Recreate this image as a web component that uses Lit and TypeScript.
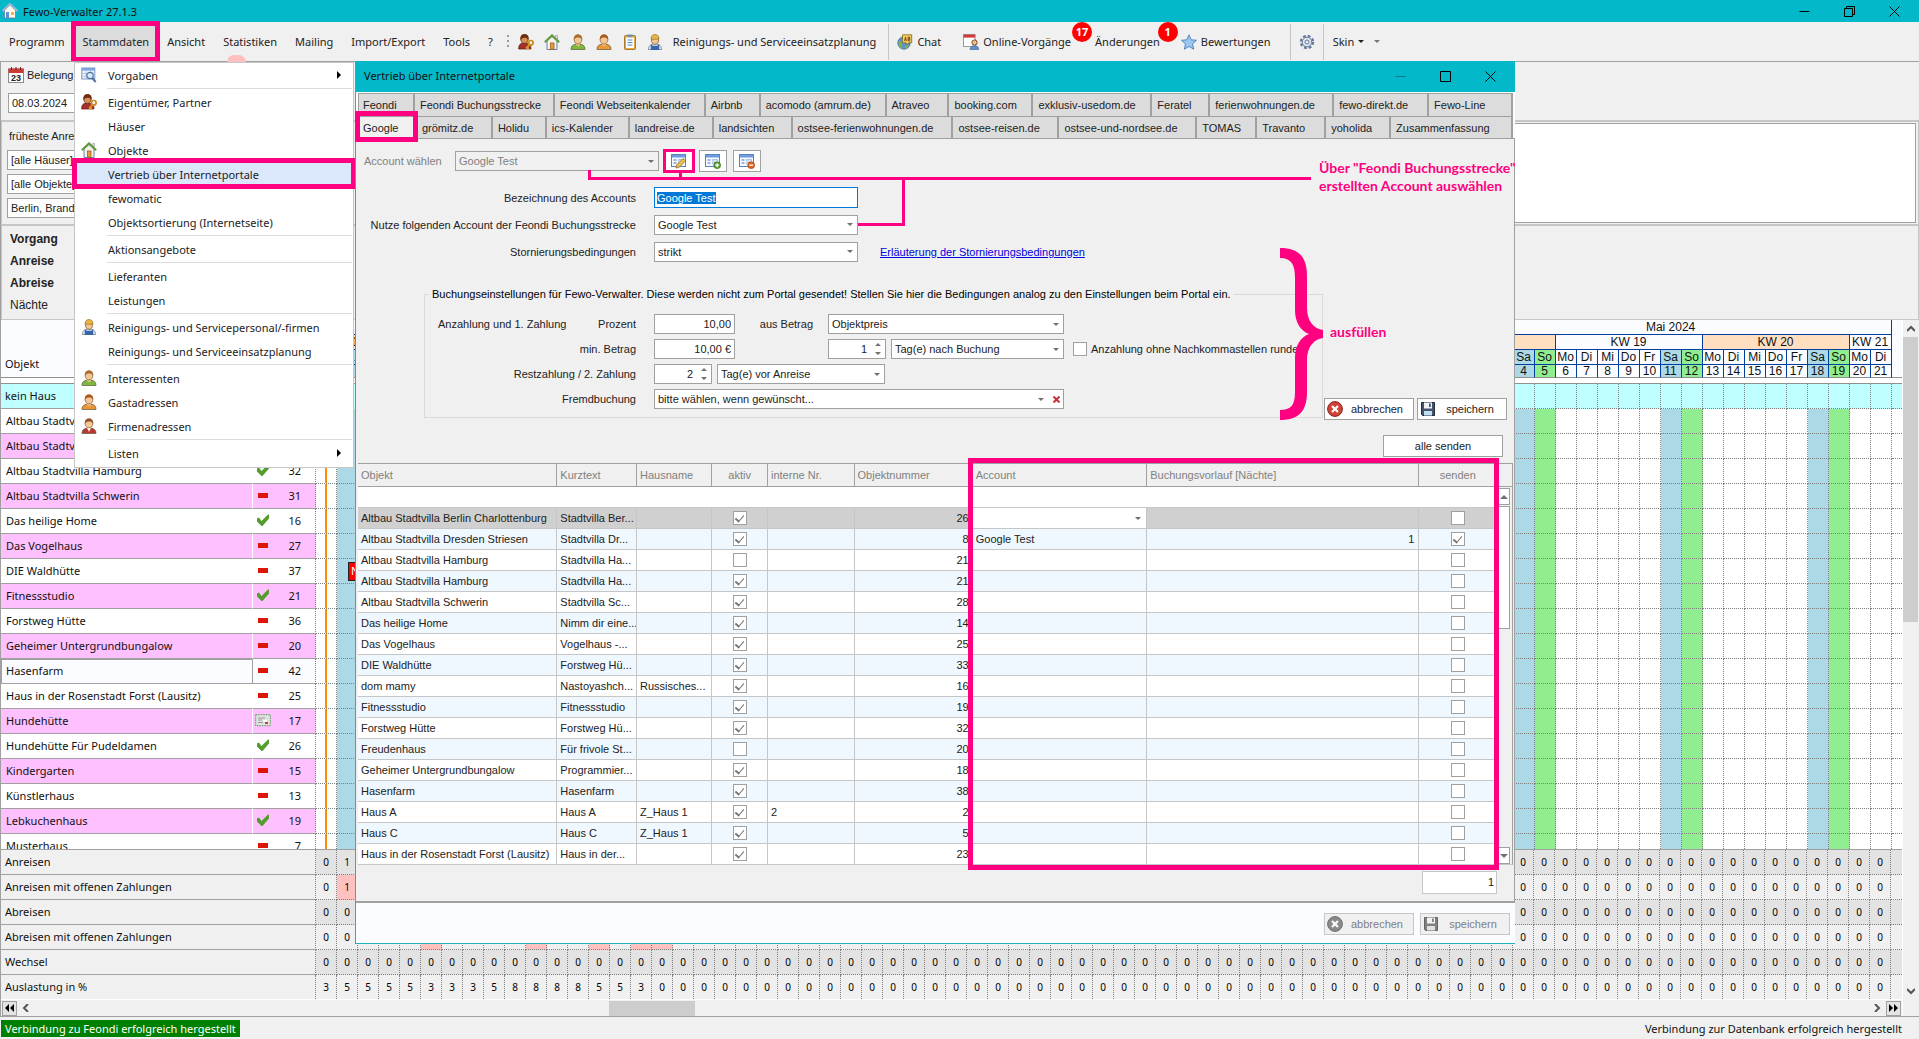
import { LitElement, html, css, svg, nothing } from "lit";
import { customElement } from "lit/decorators.js";
import { classMap } from "lit/directives/class-map.js";

/* ---------- icons (16 x 16 unless noted) ---------- */

const person = (body: string, hair: string) => svg`
  <path d="M1 15.500c0-4 2.500-5.500 7-5.500s7 1.500 7 5.500z" fill=${body} stroke="#5b5b3a" stroke-width=".7"/>
  <path d="M6 9h4v2l-2 1.500-2-1.500z" fill="#eebd8a"/>
  <ellipse cx="8" cy="5.500" rx="3.900" ry="4.500" fill="#f3c795" stroke="#8a5a2b" stroke-width=".7"/>
  <path d="M3.900 5.700C3.600 2 5.300.4 8 .4s4.400 1.600 4.100 5.300C11.200 4 9.500 3.500 8.300 3.500 6.500 3.500 4.800 4 3.900 5.700z" fill=${hair}/>`;

const form = svg`
  <rect x=".5" y="1.500" width="14" height="12" fill="#f6f9ff" stroke="#5b84bd"/>
  <rect x="1" y="2" width="13" height="2.500" fill="#6f9be0"/>
  <path d="M2.500 7h3M2.500 10h3" stroke="#4c77b5" stroke-width="1.200"/>
  <path d="M7.500 6.500h5v1.500h-5zM7.500 9.500h4v1.500h-4z" fill="#fff" stroke="#86a9dc" stroke-width=".7"/>`;

const icons = {
  house: svg`
    <path d="M3 7v8.500h10V7L8 2.500z" fill="#f4f1e6" stroke="#5577a8" stroke-width=".9"/>
    <path d="M.8 8.200 8 1.300l7.200 6.900" fill="none" stroke="#5e9a38" stroke-width="2"/>
    <path d="M11.500 1.500h2v3.500l-2-1.800z" fill="#eee" stroke="#777" stroke-width=".5"/>
    <rect x="6.500" y="9" width="3.500" height="6.200" fill="#e79a3c" stroke="#935315" stroke-width=".7"/>`,
  appHouse: svg`
    <path d="M2.500 7v8h11V7L8 2z" fill="#fdf9ea" stroke="#6c7fa0" stroke-width=".8"/>
    <path d="M.5 8 8 1.200 15.500 8" fill="none" stroke="#9bb7d8" stroke-width="2.200"/>
    <rect x="4" y="9" width="3" height="6" fill="#5f8fd0"/><rect x="9" y="9" width="3" height="3" fill="#f0b44c"/>`,
  owner: svg`
    <path d="M.6 15c0-4.500 2-6 5.900-6s6.500 1.500 6.500 6z" fill="#a6302c" stroke="#5b1714" stroke-width=".7"/>
    <ellipse cx="6.500" cy="5" rx="3.600" ry="4.400" fill="#d98f58" stroke="#643412" stroke-width=".7"/>
    <path d="M2.500 6.500C1.800 2 3.500.2 6.500.2s4.800 1.800 4 6C9.500 4.200 8 3.800 6.500 3.800s-3.100.6-4 2.700z" fill="#6d2f12"/>
    <circle cx="12.800" cy="8.800" r="2.300" fill="none" stroke="#c98a1e" stroke-width="1.700"/>
    <path d="M11.500 10.500 8 14.700m1.200-1.200 1.700 1.500" stroke="#d99a2a" stroke-width="1.800"/>`,
  green: person("#7cb83c", "#a86a2e"),
  orange: person("#ea9536", "#a8581e"),
  red: svg`${person("#b93633", "#93532a")}<path d="M6.500 10.200 8 14l1.500-3.800z" fill="#fff"/>`,
  worker: svg`
    <path d="M1.500 15.500c0-4 2.500-5.500 6.500-5.500s6.500 1.500 6.500 5.500z" fill="#e9eef5" stroke="#4a5668" stroke-width=".6"/>
    <path d="M4.500 15.500v-5M11.500 15.500v-5M4.500 12.500h7v3h-7z" fill="#3466ad" stroke="#3466ad" stroke-width="1.500"/>
    <ellipse cx="8" cy="6" rx="3.500" ry="4.200" fill="#f3c795" stroke="#7a4b1e" stroke-width=".7"/>
    <path d="M4 5.200C4 2 5.500.5 8 .5s4 1.500 4 4.700z" fill="#e8b548" stroke="#8e6a1b" stroke-width=".6"/>`,
  clipboard: svg`
    <rect x="2.500" y="1.500" width="11" height="14" rx="1" fill="#e5a93a" stroke="#97661a" stroke-width=".8"/>
    <rect x="4" y="3.500" width="8" height="10.500" fill="#fff"/>
    <rect x="5.500" y=".5" width="5" height="2.600" fill="#6f8fc0"/>
    <path d="M5.500 6h5M5.500 8.500h5M5.500 11h5" stroke="#4f84cc"/>`,
  chat: svg`
    <circle cx="7" cy="9" r="6.200" fill="#5d93cf" stroke="#345d8e" stroke-width=".7"/>
    <path d="M2 7c2 0 3 2 2.500 4s1 3 2.500 4c-4 0-6.500-4-5-8zM8 12l4-1c-.5 2-2 3.500-4 4z" fill="#7db74a"/>
    <path d="M5.500.8h9.200v8h-3l-1.500 2-1-2h-3.700z" fill="#f5cf63" stroke="#8b6513" stroke-width=".8"/>
    <path d="M7.500 7 8.500 3l1 4M7.800 5.800h1.400M11.200 3v4h1.500V5h-1.500 1.500V3z" fill="none" stroke="#6b3f10" stroke-width=".8"/>`,
  online: svg`
    <rect x=".6" y=".6" width="11.500" height="12" fill="#fff" stroke="#7d8694" stroke-width=".8"/>
    <rect x=".6" y=".6" width="11.500" height="3" fill="#d23c37"/>
    <circle cx="11.500" cy="8.500" r="2.600" fill="#f0c08e" stroke="#7c4622"/>
    <path d="M7 15.500c0-2.500 1.800-3.800 4.500-3.800s4.300 1.300 4.300 3.800z" fill="#5f8ec9" stroke="#3a608f" stroke-width=".6"/>`,
  star: svg`<path d="m8 .8 2.200 5 5.300.5-4 3.600 1.200 5.300L8 12.400l-4.700 2.800 1.200-5.300-4-3.600 5.300-.5z" fill="#9cc6ef" stroke="#4a7fb8" stroke-width=".9"/>`,
  gear: svg`
    <circle cx="8" cy="8" r="6.200" fill="none" stroke="#62769b" stroke-width="2" stroke-dasharray="2.900 1.970"/>
    <circle cx="8" cy="8" r="4.800" fill="#dfe5ee" stroke="#62769b"/>
    <circle cx="8" cy="8" r="2" fill="#f0f0f0" stroke="#62769b"/>`,
  calendar: svg`
    <rect x=".5" y="2" width="15" height="13.500" fill="#fff" stroke="#8c8c8c"/>
    <rect x=".5" y="1.500" width="15" height="4.500" fill="#cf3a35"/>
    <path d="M3.500 0v3M8 0v3M12.500 0v3" stroke="#6e2422"/>`,
  lookup: svg`
    <rect x=".8" y="1" width="13" height="11" fill="#eef4fd" stroke="#7796c6"/>
    <rect x="1" y="1" width="12.600" height="2.600" fill="#7ba3de"/>
    <path d="M1 6.500h13M1 9.300h13M5 3.500V12M9.500 3.500V12" stroke="#a9c0e2" stroke-width=".8"/>
    <circle cx="9" cy="8.500" r="3.200" fill="#dcecff" fill-opacity=".8" stroke="#55719c" stroke-width="1.200"/>
    <path d="m11.200 11 3.500 4" stroke="#55719c" stroke-width="2"/>`,
  check: svg`<path d="M2 6.500 4 5.500l2.500 3.500L13 2.500h1v4L7.500 14h-1L2 9.500z" fill="#549c2c"/>`,
  minus: svg`<rect x="3" y="6" width="10" height="5" fill="#dd1507"/>`,
  card: svg`
    <rect x=".7" y="2.700" width="14.600" height="11" fill="#dfe3e2" stroke="#4e9a55" stroke-dasharray="1.500 1"/>
    <path d="M3 6h7M3 8h4M3 10.500h5" stroke="#9a9a9a"/><path d="M8 8h4v1.500H8z" fill="#fff"/>
    <rect x="10" y="10" width="3" height="2" fill="#e1371f"/>`,
  edit: svg`${form}<path d="m5 15 .6-3L12 5.500l2.600 2.300L8 14.300z" fill="#f2c24f" stroke="#94691b" stroke-width=".8"/>`,
  add: svg`${form}<circle cx="12.200" cy="12.200" r="3.400" fill="#5a9e33" stroke="#2f6a14" stroke-width=".6"/><path d="M10.200 12.200h4M12.200 10.200v4" stroke="#fff" stroke-width="1.300"/>`,
  remove: svg`${form}<circle cx="12.200" cy="12.200" r="3.400" fill="#e2631c" stroke="#a33a08" stroke-width=".6"/><path d="M10.200 12.200h4" stroke="#fff" stroke-width="1.300"/>`,
  cancel: svg`
    <circle cx="8" cy="8" r="7.400" fill="#cf4338" stroke="#8d1f18"/>
    <path d="m4.300 5.800 1.500-1.500L8 6.400l2.200-2.100 1.500 1.500L9.600 8l2.100 2.200-1.500 1.500L8 9.600l-2.200 2.100-1.500-1.500L6.400 8z" fill="#fff"/>`,
  save: svg`
    <path d="M1.500 1.500h13v13h-12l-1-1z" fill="#44546e" stroke="#222c3d"/>
    <rect x="4" y="1.500" width="8" height="6" fill="#eef2f7"/><rect x="9" y="2.500" width="1.800" height="3.500" fill="#44546e"/>
    <rect x="4" y="10" width="8" height="4.500" fill="#bfe0f2"/>`,
};

type IconName = keyof typeof icons;
const icon = (name: IconName) =>
  html`<svg class="icon" viewBox="0 0 16 16" width="16" height="16" aria-hidden="true">${icons[name]}</svg>`;

const glyph = {
  min: html`<svg width="11" height="11" viewBox="0 0 11 11"><path d="M.5 5.500h10" stroke="currentColor"/></svg>`,
  max: html`<svg width="11" height="11" viewBox="0 0 11 11"><path d="M.5.5h10v10H.5z" fill="none" stroke="currentColor"/></svg>`,
  restore: html`<svg width="11" height="11" viewBox="0 0 11 11"><path d="M.5 2.500h8v8h-8zM2.500 2.500v-2h8v8h-2" fill="none" stroke="currentColor"/></svg>`,
  close: html`<svg width="11" height="11" viewBox="0 0 11 11"><path d="m.5.5 10 10m0-10-10 10" stroke="currentColor"/></svg>`,
};

const base = css`
  * { box-sizing: border-box; }
  button, input, select { font: inherit; color: inherit; margin: 0; border-radius: 0; }
  button { padding: 0; background: none; border: 0; white-space: nowrap; }
  svg { display: block; flex: none; }
  .winbtns { display: flex; margin-left: auto; padding-right: 2px; }
  .winbtns button { width: 45px; display: grid; place-items: center; color: #000; }
`;

/* ---------- occupancy planner ---------- */

const DAYS = 75;
const FIRST_SUNDAY = 2;
const dayNames = ["Fr", "Sa", "So", "Mo", "Di", "Mi", "Do"];
const columns = Array.from({ length: DAYS }, (_, i) => i);
const dayNumber = (i: number) => (i < 24 ? i + 8 : i < 54 ? i - 23 : i - 53);
const weekend = (i: number) => ((i - FIRST_SUNDAY + 7) % 7 === 0 ? "so" : (i - 1 + 7) % 7 === 0 ? "sa" : "");

type PlannerRow = { name: string; state: IconName; no: number; pink?: boolean };
const objects: PlannerRow[] = [
  { name: "Altbau Stadtvilla Berlin", state: "check", no: 26 },
  { name: "Altbau Stadtvilla Dresden", state: "minus", no: 8, pink: true },
  { name: "Altbau Stadtvilla Hamburg", state: "check", no: 32 },
  { name: "Altbau Stadtvilla Schwerin", state: "minus", no: 31, pink: true },
  { name: "Das heilige Home", state: "check", no: 16 },
  { name: "Das Vogelhaus", state: "minus", no: 27, pink: true },
  { name: "DIE Waldhütte", state: "minus", no: 37 },
  { name: "Fitnessstudio", state: "check", no: 21, pink: true },
  { name: "Forstweg Hütte", state: "minus", no: 36 },
  { name: "Geheimer Untergrundbungalow", state: "minus", no: 20, pink: true },
  { name: "Hasenfarm", state: "minus", no: 42 },
  { name: "Haus in der Rosenstadt Forst (Lausitz)", state: "minus", no: 25 },
  { name: "Hundehütte", state: "card", no: 17, pink: true },
  { name: "Hundehütte Für Pudeldamen", state: "check", no: 26 },
  { name: "Kindergarten", state: "minus", no: 15, pink: true },
  { name: "Künstlerhaus", state: "minus", no: 13 },
  { name: "Lebkuchenhaus", state: "check", no: 19, pink: true },
  { name: "Musterhaus", state: "minus", no: 7 },
];

const summary: { name: string; values: number[]; open: number[] }[] = [
  { name: "Anreisen", values: [0, 1], open: [] },
  { name: "Anreisen mit offenen Zahlungen", values: [0, 1], open: [1] },
  { name: "Abreisen", values: [], open: [] },
  { name: "Abreisen mit offenen Zahlungen", values: [], open: [5, 10, 13, 15, 16] },
  { name: "Wechsel", values: [], open: [] },
  { name: "Auslastung in %", values: [3, 5, 5, 5, 5, 3, 3, 3, 5, 8, 8, 8, 8, 5, 5, 3], open: [] },
];

@customElement("booking-planner")
class BookingPlanner extends LitElement {
  static styles = [base, css`
    :host { display: flex; flex: 1; min-height: 0; background: #f0f0f0; border-left: 1px solid #a0a0a0; }
    .main { flex: 1; min-width: 0; display: flex; flex-direction: column; }
    .view { flex: 1; min-height: 0; overflow: hidden; background: #fff; }
    table { border-collapse: separate; border-spacing: 0; table-layout: fixed; width: 100%; }
    th, td { padding: 0; font-weight: 400; white-space: nowrap; overflow: hidden; }
    .c-name { width: 252px; } .c-state { width: 25px; } .c-no { width: 38px; } .c-day { width: 21px; }
    thead th { background: #fbfcff; color: #111; font-family: "Liberation Sans", Arial, sans-serif; font-size: 12px; line-height: 14px; height: 15px; text-align: center; border-right: 1px solid #003f9f; border-bottom: 1px solid #003f9f; }
    thead tr:last-child th { height: 13px; line-height: 12px; border-bottom: 1px solid #909090; }
    thead tr:first-child th.title { vertical-align: bottom; text-align: left; border-right: 0; border-bottom: 1px solid #909090; padding: 0 0 6px 4px; font-family: inherit; font-size: 11px; }
    thead .tail { border-right: 0; border-bottom-color: #909090; }
    thead .even { background: #ffdfbf; }
    thead .sa, .sa { background: #add8e6; }
    thead .so, .so { background: #90ee90; }
    .gap td { height: 6px; border-bottom: 1px solid #909090; }
    tbody tr.obj td, tbody tr.none td { height: 25px; border-bottom: 1px dotted #808080; border-right: 1px dotted #808080; }
    tbody tr.none td.name { border-bottom: 1px solid #a0a0a0; }
    .name, .no { padding-bottom: 2px; }
    .obj .name { padding-left: 5px; }
    tr.obj td.name { border-right: 1px solid #fff; border-bottom: 1px solid #a0a0a0; }
    tr.obj td.state { border-right: 0; border-bottom: 1px solid #a0a0a0; padding-bottom: 2px; }
    tr.obj td.no { border-bottom: 1px solid #a0a0a0; }
    .state svg { margin: 0 auto 0 2px; }
    .no { text-align: right; padding-right: 14px; }
    tbody .pink .name, tbody .pink .state, tbody .pink .no { background: #ffc0ff; }
    tbody .none td { background: #c0ffff; }
    .none .name { padding-left: 4px; }
    tbody tr.current td.name { border: 1px solid #a0a0a0; background: #fbfcff; padding-left: 4px; }
    tbody .current .state, tbody .current .no { background: #fbfcff; }
    .today { background: linear-gradient(#ff8c00, #ff8c00) 9px 0 / 2px 100% no-repeat; }
    .booking { display: block; width: 20px; height: 19px; margin-left: 11px; padding-left: 2px; background: #f00; border: 1px solid #222; color: #fff; line-height: 16px; }
    .sums { border-top: 1px solid #a0a0a0; background: #f0f0f0; }
    .sums th { text-align: left; padding: 0 0 2px 4px; border-bottom: 1px solid #a0a0a0; border-right: 1px dotted #808080; }
    .sums td { height: 25px; padding-bottom: 1px; text-align: center; border-right: 1px dotted #808080; border-bottom: 1px dotted #808080; font-size: 10px; color: #000; }
    .sums tr:last-child > * { border-bottom: 0; height: 24px; }
    .sums tr:nth-child(odd) td { background: #e3e3e3; }
    .sums tr td.open { background: #ffc0c0; }
    td:last-child { border-right: 0 !important; }
    .hscroll { display: flex; align-items: center; height: 17px; padding: 0 1px; border-top: 1px solid #fff; color: #555; }
    .hscroll .jump { width: 15px; height: 15px; border: 1px solid #a0a0a0; background: #e3e3e3; display: grid; place-items: center; color: #000; }
    .hscroll .step { width: 18px; height: 15px; display: grid; place-items: center; }
    .vscroll .step { width: 16px; height: 17px; display: grid; place-items: center; }
    .track { flex: 1; display: grid; grid-template-columns: 574fr 86fr 1173fr; height: 15px; }
    .thumb { background: #cdcdcd; grid-column: 2; }
    .vscroll { width: 17px; display: flex; flex-direction: column; color: #555; border-left: 1px solid #fff; }
    .vscroll .track { display: grid; grid-template-columns: 1fr; grid-template-rows: 285fr 360fr; height: auto; }
    .vscroll .thumb { grid-column: 1; margin-right: 1px; }
    .vscroll::after { content: ""; height: 17px; }
  `];

  cols() {
    return html`<colgroup><col class="c-name"><col class="c-state"><col class="c-no">${columns.map(() => html`<col class="c-day">`)}<col></colgroup>`;
  }

  render() {
    const weeks = Array.from({ length: 12 }, (_, i) => ({ no: 10 + i, span: i === 0 ? 3 : i === 11 ? 2 : 7 }));
    const chevron = (d: string) => html`<svg width="8" height="8" viewBox="0 0 8 8"><path d=${d} fill="none" stroke="#555" stroke-width="2"/></svg>`;
    return html`
      <div class="main">
        <div class="view">
          <table>
            ${this.cols()}
            <thead>
              <tr><th class="title" colspan="3" rowspan="4">Objekt</th><th colspan="24">März 2024</th><th colspan="30">April 2024</th><th colspan="21">Mai 2024</th><th class="tail" rowspan="4"></th></tr>
              <tr>${weeks.map((w) => html`<th colspan=${w.span} class=${w.no % 2 ? "" : "even"}>KW ${w.no}</th>`)}</tr>
              <tr>${columns.map((i) => html`<th class=${weekend(i)}>${dayNames[i % 7]}</th>`)}</tr>
              <tr>${columns.map((i) => html`<th class=${weekend(i)}>${dayNumber(i)}</th>`)}</tr>
            </thead>
            <tbody>
              <tr class="gap"><td colspan=${DAYS + 4}></td></tr>
              <tr class="none"><td class="name" colspan="3">kein Haus</td>${columns.map(() => html`<td></td>`)}<td></td></tr>
              ${objects.map((o) => html`
                <tr class=${classMap({ obj: true, pink: !!o.pink, current: o.name === "Hasenfarm" })}>
                  <td class="name">${o.name}</td><td class="state">${icon(o.state)}</td><td class="no">${o.no}</td>
                  ${columns.map((i) => html`<td class=${i === 0 ? "today" : weekend(i)}>${i === 1 && o.name === "DIE Waldhütte" ? html`<span class="booking">N</span>` : nothing}</td>`)}
                  <td></td>
                </tr>`)}
            </tbody>
          </table>
        </div>
        <table class="sums">
          ${this.cols()}
          <tbody>
            ${summary.map((s) => html`<tr><th colspan="3" scope="row">${s.name}</th>${columns.map((i) => html`<td class=${s.open.includes(i) ? "open" : ""}>${s.values[i] ?? 0}</td>`)}<td></td></tr>`)}
          </tbody>
        </table>
        <div class="hscroll">
          <button class="jump" aria-label="Zum Anfang"><svg width="9" height="8" viewBox="0 0 9 8"><path d="M4 0v8L0 4zM9 0v8L5 4z"/></svg></button>
          <button class="step" aria-label="Zurück">${chevron("M6 0 2 4l4 4")}</button>
          <div class="track"><div class="thumb"></div></div>
          <button class="step" aria-label="Weiter">${chevron("m2 0 4 4-4 4")}</button>
          <button class="jump" aria-label="Zum Ende"><svg width="9" height="8" viewBox="0 0 9 8"><path d="m0 0 4 4-4 4zM5 0l4 4-4 4z"/></svg></button>
        </div>
      </div>
      <div class="vscroll">
        <button class="step" aria-label="Nach oben">${chevron("m0 6 4-4 4 4")}</button>
        <div class="track"><div class="thumb"></div></div>
        <button class="step" aria-label="Nach unten">${chevron("m0 2 4 4 4-4")}</button>
      </div>`;
  }
}

/* ---------- drop-down menu ---------- */

type Entry = { text: string; icon?: IconName; sub?: boolean; active?: boolean } | "-";
const entries: Entry[] = [
  { text: "Vorgaben", icon: "lookup", sub: true }, "-",
  { text: "Eigentümer, Partner", icon: "owner" }, { text: "Häuser" }, { text: "Objekte", icon: "house" },
  { text: "Vertrieb über Internetportale", active: true }, { text: "fewomatic" }, { text: "Objektsortierung (Internetseite)" }, "-",
  { text: "Aktionsangebote" }, "-",
  { text: "Lieferanten" }, { text: "Leistungen" }, "-",
  { text: "Reinigungs- und Servicepersonal/-firmen", icon: "worker" }, { text: "Reinigungs- und Serviceeinsatzplanung" }, "-",
  { text: "Interessenten", icon: "green" }, { text: "Gastadressen", icon: "orange" }, { text: "Firmenadressen", icon: "red" }, "-",
  { text: "Listen", sub: true },
];

@customElement("master-data-menu")
class MasterDataMenu extends LitElement {
  static styles = [base, css`
    :host { display: block; background: #fff; border: 1px solid #c6c6c6; padding: 0 0 2px; }
    nav { display: flex; flex-direction: column; }
    button { position: relative; display: grid; grid-template-columns: 27px 1fr 12px; align-items: center; height: 24px; padding: 0 4px 0 6px; text-align: left; color: #222; }
    .active { background: #dbe8fc; }
    .active::after { content: ""; position: absolute; inset: -4px -3px -3px -3px; border: 5px solid #ff0080; }
    hr { width: calc(100% - 33px); height: 1px; margin: 1px 1px 1px auto; border: 0; background: #dcdcdc; }
  `];
  render() {
    return html`<nav>${entries.map((e) => e === "-" ? html`<hr>` : html`
      <button class=${e.active ? "active" : ""}><span>${e.icon ? icon(e.icon) : nothing}</span>${e.text}
        ${e.sub ? html`<svg width="4" height="8" viewBox="0 0 4 8"><path d="m0 0 4 4-4 4z"/></svg>` : nothing}</button>`)}</nav>`;
  }
}

/* ---------- portal dialog ---------- */

const tabsTop = ["Feondi", "Feondi Buchungsstrecke", "Feondi Webseitenkalender", "Airbnb", "acomodo (amrum.de)", "Atraveo", "booking.com", "exklusiv-usedom.de", "Feratel", "ferienwohnungen.de", "fewo-direkt.de", "Fewo-Line"];
const tabsBottom = ["Google", "grömitz.de", "Holidu", "ics-Kalender", "landreise.de", "landsichten", "ostsee-ferienwohnungen.de", "ostsee-reisen.de", "ostsee-und-nordsee.de", "TOMAS", "Travanto", "yoholida", "Zusammenfassung"];

type Row = [string, string, string, boolean, string, number];
const rows: Row[] = [
  ["Altbau Stadtvilla Berlin Charlottenburg", "Stadtvilla Ber...", "", true, "", 26],
  ["Altbau Stadtvilla Dresden Striesen", "Stadtvilla Dr...", "", true, "", 8],
  ["Altbau Stadtvilla Hamburg", "Stadtvilla Ha...", "", false, "", 21],
  ["Altbau Stadtvilla Hamburg", "Stadtvilla Ha...", "", true, "", 21],
  ["Altbau Stadtvilla Schwerin", "Stadtvilla Sc...", "", true, "", 28],
  ["Das heilige Home", "Nimm dir eine...", "", true, "", 14],
  ["Das Vogelhaus", "Vogelhaus -...", "", true, "", 25],
  ["DIE Waldhütte", "Forstweg Hü...", "", true, "", 33],
  ["dom mamy", "Nastoyashch...", "Russisches...", true, "", 16],
  ["Fitnessstudio", "Fitnessstudio", "", true, "", 19],
  ["Forstweg Hütte", "Forstweg Hü...", "", true, "", 32],
  ["Freudenhaus", "Für frivole St...", "", false, "", 20],
  ["Geheimer Untergrundbungalow", "Programmier...", "", true, "", 18],
  ["Hasenfarm", "Hasenfarm", "", true, "", 38],
  ["Haus A", "Haus A", "Z_Haus 1", true, "2", 2],
  ["Haus C", "Haus C", "Z_Haus 1", true, "", 5],
  ["Haus in der Rosenstadt Forst (Lausitz)", "Haus in der...", "", true, "", 23],
];

@customElement("portal-dialog")
class PortalDialog extends LitElement {
  static styles = [base, css`
    :host { display: block; background: #fbfcff; border: solid #1fb3c2; border-width: 0 0 1px 1px; color: #222; font-family: "Liberation Sans", Arial, sans-serif; font-size: 11px; }
    header { display: flex; height: 31px; background: #03b8c8; color: #111; padding: 0 0 0 8px; font-family: "Noto Sans", sans-serif; }
    header h2 { margin: 0; font: inherit; line-height: 30px; }
    header button:disabled { opacity: .35; }
    .tabs { display: grid; background: #fff; margin: 0 2px; border-left: 1px solid #a0a0a0; }
    .tabs button { height: 22px; background: #dcdcdc; border: solid #a0a0a0; border-width: 1px 2px 0 0; text-align: left; padding: 0 0 0 5px; overflow: hidden; }
    .top { margin-top: 1px; grid-template-columns: 56fr 140fr 151fr 55fr 126fr 63fr 84fr 119fr 58fr 124fr 95fr 84fr; }
    .top button { height: 23px; }
    .bottom { grid-template-columns: 58fr 76fr 54fr 83fr 84fr 79fr 161fr 106fr 138fr 60fr 69fr 65fr 122fr; }
    .tabs .on { position: relative; background: #f0f0f0; border-bottom: 0; overflow: visible; padding-left: 4px; }
    .tabs button:first-child { padding-left: 4px; }
    .on::after { content: ""; position: absolute; inset: -6px -3px -4px -4px; border: 5px solid #ff0080; }
    .page { background: #f0f0f0; border: solid #a0a0a0; border-width: 1px 1px 2px 0; padding: 10px 0 0; }
    .bar { display: flex; align-items: center; gap: 4px; padding-left: 8px; height: 24px; }
    .bar label { width: 87px; color: #808080; }
    .bar button { width: 28px; height: 22px; background: #fff; border: 1px solid #a0a0a0; display: grid; place-items: center; }
    .bar button + button { margin-right: 2px; }
    .bar .marked { width: 32px; height: 24px; border: 3px solid #ff0080; }
    .field { height: 20px; width: 100%; min-width: 0; background: #fff; border: 1px solid #a0a0a0; padding: 0 3px; outline: 0; appearance: none; }
    .num { text-align: right; appearance: textfield; }
    .num::-webkit-inner-spin-button { appearance: none; }
    .focus { height: 21px; border-color: #0078d7; padding: 0 2px; }
    .focus::selection { background: #0078d7; color: #fff; }
    .field:disabled { background: #f0f0f0; color: #808080; opacity: 1; }
    .sel { display: grid; align-items: center; }
    .sel > *, .sel::after { grid-area: 1 / 1; }
    .sel::after { content: ""; justify-self: end; margin-right: 5px; border: solid transparent; border-width: 3px 3px 0; border-top-color: #707070; pointer-events: none; }
    .spin::after { display: none; }
    .spin .num { padding-right: 18px; }
    .spin svg { justify-self: end; margin-right: 5px; pointer-events: none; }
    .w81 { width: 81px; } .w58 { width: 58px; } .w168 { width: 168px; } .w173 { width: 173px; } .w204 { width: 204px; } .w236 { width: 236px; } .w410 { width: 410px; }
    .clear::after { margin-right: 20px; }
    .clear button { justify-self: end; width: 15px; display: grid; place-items: center; }
    .form { display: grid; grid-template-columns: 280px 204px auto; column-gap: 18px; row-gap: 6px; grid-auto-rows: 21px; align-items: center; margin-top: 14px; }
    .form > label { grid-column: 1; text-align: right; }
    .form a { color: #0000e0; margin-left: 4px; justify-self: start; }
    .booking { display: flex; align-items: flex-end; gap: 3px; margin-top: 25px; padding: 0 7px 0 68px; }
    fieldset { flex: 1; margin: 0 -2px 2px 0; border: 1px solid #dadada; padding: 13px 0 8px; min-width: 0; }
    legend { margin-left: 4px; padding: 0 3px; line-height: 14px; color: #000; }
    .line { display: flex; align-items: center; height: 20px; margin-bottom: 5px; }
    .line:last-child { margin-bottom: 0; }
    .lead { width: 211px; margin-right: 18px; padding-left: 13px; display: flex; justify-content: space-between; }
    .lead label { margin-left: auto; }
    .mid { width: 93px; padding-right: 15px; text-align: right; }
    .near { margin-left: 5px; }
    input[type="checkbox"] { appearance: none; width: 14px; height: 14px; background: #fff; border: 1px solid #a0a0a0; display: grid; place-items: center; flex: none; }
    input[type="checkbox"]:checked::after { content: ""; width: 4px; height: 7px; margin-top: -2px; border: solid #777; border-width: 0 1px 2px 0; transform: rotate(40deg); }
    .round { display: flex; align-items: center; gap: 4px; margin-left: 9px; white-space: nowrap; }
    .cmd { display: grid; grid-template-columns: 16px 1fr; align-items: center; width: 90px; height: 22px; padding: 0 2px; background: #fff; border: 1px solid #a0a0a0; }
    .cmd:disabled { background: #f0f0f0; border-color: #c6c6c6; color: #808080; }
    .cmd:disabled svg { filter: grayscale(1); opacity: .7; }
    .all { display: block; width: 120px; height: 22px; margin: 15px 11px 6px auto; background: #fff; border: 1px solid #a0a0a0; }
    .data { display: flex; margin: 0 1px 0 2px; border: 1px solid #a0a0a0; border-bottom-color: #c6c6c6; border-left: 0; }
    table { flex: 1; border-collapse: separate; border-spacing: 0; table-layout: fixed; width: 0; }
    th, td { padding: 0 3px; font-weight: 400; text-align: left; white-space: nowrap; overflow: hidden; border: solid #c6c6c6; border-width: 0 1px 1px 0; }
    th { height: 23px; color: #808080; border-color: #a0a0a0; }
    .filter td { height: 21px; background: #fff; border-right: 0; }
    tbody td { height: 21px; background: #fff; }
    tbody tr:nth-child(odd) td { background: #eff8ff; }
    tbody tr.filter td { background: #fff; }
    tbody tr.picked td { background: #d0d0d0; }
    tbody tr:last-child td { border-bottom: 0; height: 20px; }
    tbody tr.picked td.open { background: #fff; padding: 0; }
    .account { padding-left: 5px; }
    .open .field { border: 0; }
    .center { text-align: center; }
    td.center input { margin: 0 auto; }
    .right { text-align: right; padding-right: 1px; }
    .vbar { width: 15px; display: flex; flex-direction: column; padding-right: 2px; }
    .vbar i { height: 23px; border-bottom: 1px solid #a0a0a0; margin-right: -2px; }
    .vbar button { height: 17px; margin-top: 1px; border: 1px solid #a0a0a0; background: #fff; display: grid; place-items: center; color: #707070; }
    .rail { flex: 1; display: grid; grid-template-rows: 125fr 218fr; }
    .rail span { border: 1px solid #a0a0a0; background: #fff; margin-top: 1px; }
    .total { display: flex; justify-content: flex-end; height: 36px; padding: 6px 17px 7px 0; }
    .total output { width: 75px; background: #fff; border: 1px solid #c6c6c6; text-align: right; line-height: 21px; padding-right: 2px; }
    footer { display: flex; justify-content: flex-end; gap: 6px; padding: 10px 5px 8px; }
    .notes { position: absolute; left: 0; top: 0; width: 100%; height: 100%; pointer-events: none; overflow: visible; }
    .note { position: absolute; color: #ff0080; font-family: Lato, "Open Sans", sans-serif; font-weight: 700; font-size: 14px; line-height: 18px; white-space: nowrap; margin: 0; }
    .n1 { left: 963px; top: 98px; } .n2 { left: 974px; top: 262px; }
  `];

  firstUpdated() {
    const el = this.renderRoot.querySelector<HTMLInputElement>("#name");
    el?.focus();
    el?.select();
  }

  select(id: string, value: string, cls: string, disabled = false, label = "") {
    return html`<span class="sel ${cls}"><select class="field" id=${id} ?disabled=${disabled} aria-label=${label || nothing}><option>${value}</option></select></span>`;
  }

  spin(id: string, value: string, label: string) {
    return html`<span class="sel spin w58"><input class="field num" type="number" id=${id} .value=${value} aria-label=${label}>
      <svg width="6" height="12" viewBox="0 0 6 12"><path d="m0 3 3-3 3 3zM0 9l3 3 3-3z" fill="#707070"/></svg></span>`;
  }

  render() {
    return html`
      <header><h2>Vertrieb über Internetportale</h2>
        <div class="winbtns"><button disabled aria-label="Minimieren">${glyph.min}</button><button aria-label="Maximieren">${glyph.max}</button><button aria-label="Schließen">${glyph.close}</button></div>
      </header>
      <div class="tabs top">${tabsTop.map((t) => html`<button>${t}</button>`)}</div>
      <div class="tabs bottom">${tabsBottom.map((t) => html`<button class=${t === "Google" ? "on" : ""}>${t}</button>`)}</div>
      <section class="page">
        <div class="bar">
          <label for="account">Account wählen</label>
          ${this.select("account", "Google Test", "w204", true)}
          <button class="marked" aria-label="Bearbeiten">${icon("edit")}</button>
          <button aria-label="Neu">${icon("add")}</button>
          <button aria-label="Löschen">${icon("remove")}</button>
        </div>
        <div class="form">
          <label for="name">Bezeichnung des Accounts</label><input id="name" class="field focus" .value=${"Google Test"}>
          <label for="feondi">Nutze folgenden Account der Feondi Buchungsstrecke</label>${this.select("feondi", "Google Test", "")}
          <label for="storno">Stornierungsbedingungen</label>${this.select("storno", "strikt", "")}<a href="#storno">Erläuterung der Stornierungsbedingungen</a>
        </div>
        <div class="booking">
          <fieldset>
            <legend>Buchungseinstellungen für Fewo-Verwalter. Diese werden nicht zum Portal gesendet! Stellen Sie hier die Bedingungen analog zu den Einstellungen beim Portal ein.</legend>
            <div class="line"><div class="lead"><span>Anzahlung und 1. Zahlung</span><label for="percent">Prozent</label></div>
              <input id="percent" class="field num w81" .value=${"10,00"}><label class="mid" for="base">aus Betrag</label>${this.select("base", "Objektpreis", "w236")}</div>
            <div class="line"><div class="lead"><label for="minimum">min. Betrag</label></div>
              <input id="minimum" class="field num w81" .value=${"10,00 €"}><span class="mid"></span>${this.spin("days1", "1", "Tage nach Buchung")}${this.select("unit1", "Tag(e) nach Buchung", "w173 near", false, "Einheit")}
              <label class="round"><input type="checkbox">Anzahlung ohne Nachkommastellen runden</label></div>
            <div class="line"><div class="lead"><label for="days2">Restzahlung / 2. Zahlung</label></div>
              ${this.spin("days2", "2", "Restzahlung")}${this.select("unit2", "Tag(e) vor Anreise", "w168 near", false, "Einheit")}</div>
            <div class="line"><div class="lead"><label for="foreign">Fremdbuchung</label></div>
              <span class="sel clear w410"><select class="field" id="foreign"><option>bitte wählen, wenn gewünscht...</option></select><button aria-label="Leeren"><svg width="7" height="7" viewBox="0 0 7 7"><path d="m.5.5 6 6m0-6-6 6" stroke="#c8303c" stroke-width="2"/></svg></button></span></div>
          </fieldset>
          <button class="cmd">${icon("cancel")}<span>abbrechen</span></button>
          <button class="cmd">${icon("save")}<span>speichern</span></button>
        </div>
        <button class="all">alle senden</button>
        <div class="data">
          <table>
            <colgroup>${[17.5, 7, 6.6, 4.9, 7.6, 10.2, 15.5, 23.9].map((w) => html`<col style="width:${w}%">`)}<col></colgroup>
            <thead><tr><th>Objekt</th><th>Kurztext</th><th>Hausname</th><th class="center">aktiv</th><th>interne Nr.</th><th>Objektnummer</th><th class="account">Account</th><th>Buchungsvorlauf [Nächte]</th><th class="center">senden</th></tr></thead>
            <tbody>
              <tr class="filter"><td colspan="9"></td></tr>
              ${rows.map((r, i) => html`<tr class=${i === 0 ? "picked" : ""}>
                <td>${r[0]}</td><td>${r[1]}</td><td>${r[2]}</td>
                <td class="center"><input type="checkbox" .checked=${r[3]} aria-label="aktiv"></td>
                <td>${r[4]}</td><td class="right">${r[5]}</td>
                <td class=${i === 0 ? "open" : "account"}>${i === 0 ? this.select("cell", "", "", false, "Account") : i === 1 ? "Google Test" : nothing}</td>
                <td class="right">${i === 1 ? html`1&nbsp;` : nothing}</td>
                <td class="center"><input type="checkbox" .checked=${i === 1} aria-label="senden"></td></tr>`)}
            </tbody>
          </table>
          <div class="vbar"><i></i><button aria-label="Nach oben"><svg width="8" height="4" viewBox="0 0 8 4"><path d="m0 4 4-4 4 4z" fill="currentColor"/></svg></button>
            <div class="rail"><span></span></div>
            <button aria-label="Nach unten"><svg width="8" height="4" viewBox="0 0 8 4"><path d="m0 0 4 4 4-4z" fill="currentColor"/></svg></button></div>
        </div>
        <div class="total"><output>1</output></div>
      </section>
      <footer><button class="cmd" disabled>${icon("cancel")}<span>abbrechen</span></button><button class="cmd" disabled>${icon("save")}<span>speichern</span></button></footer>
      <svg class="notes" aria-hidden="true">
        <g fill="none" stroke="#ff0080" stroke-width="3">
          <path d="M233.500 109v8.500H955M324.500 112v5M547.500 117.500v46H502"/>
          <rect x="614.500" y="399.500" width="526" height="407" stroke-width="5"/>
        </g>
        <path transform="translate(-356 -61)" fill="#ff0080" d="M1280 248C1298 248 1307 256 1307 276V308C1307 321 1314 329 1323 330V338C1314 339 1307 347 1307 360V392C1307 412 1298 420 1280 420V410C1291 410 1295 405 1295 392V358C1295 345 1301 337 1309 334C1301 331 1295 323 1295 310V278C1295 264 1291 258 1280 258Z"/>
      </svg>
      <p class="note n1">Über "Feondi Buchungsstrecke"<br>erstellten Account auswählen</p>
      <p class="note n2">ausfüllen</p>`;
  }
}

/* ---------- application frame ---------- */

@customElement("app-root")
class AppRoot extends LitElement {
  static styles = [base, css`
    :host { position: relative; display: flex; flex-direction: column; height: 100vh; overflow: hidden; background: #f0f0f0; color: #222; font-family: "Noto Sans", "Open Sans", sans-serif; font-size: 11px; }
    .title { display: flex; align-items: center; height: 22px; padding-left: 2px; background: #03b8c8; color: #111; gap: 5px; }
    .title h1 { margin: 0; font: inherit; }
    .title .winbtns button { height: 20px; }
    .menubar { display: flex; align-items: center; height: 39px; }
    .menubar button { display: flex; align-items: center; gap: 4px; height: 37px; padding: 0 9px; color: #222; }
    .menubar .on { position: relative; background: #dcdcdc; }
    .on::after { content: ""; position: absolute; inset: -2px -2px; border: 5px solid #ff0080; }
    .menubar .tool { padding: 0 5px; }
    .menubar .wide { padding: 0 9px 0 4px; gap: 10px; }
    .menubar .chat { padding: 0 10px 0 5px; }
    .menubar .online { padding: 0 3px 0 12px; }
    .menubar .changes { padding: 0; }
    .menubar .ratings { padding: 0 16px 0 0; }
    .menubar .skin { padding: 0 6px; }
    .grip { width: 2px; height: 14px; margin: 0 4px 0 5px; background: repeating-linear-gradient(#999 0 2px, transparent 2px 5px); }
    .rule { width: 1px; height: 36px; background: #c6c6c6; margin: 0 3px; }
    .badge { display: grid; place-items: center; width: 20px; height: 20px; border-radius: 10px; background: #f00; color: #fff; font-weight: 700; font-size: 11px; margin: 0 3px 20px -2px; z-index: 1; }
    .tri { border: solid transparent; border-width: 3px 3px 0; border-top-color: #222; }
    .tri.dim { border-top-color: #777; margin-left: 4px; }
    .top { display: grid; grid-template-rows: 59px 106px 94px; border-left: 1px solid #a0a0a0; position: relative; }
    .alarm { position: absolute; left: 226px; top: -6px; width: 19px; height: 7px; border-radius: 10px 10px 0 0; background: #ffc0c0; }
    .tabline { border-top: 1px solid #a0a0a0; padding: 5px 7px 0; }
    .belegung, .text { font-family: "Liberation Sans", Arial, sans-serif; }
    .belegung { display: flex; gap: 3px; align-items: center; }
    .cal { display: grid; } .cal > * { grid-area: 1 / 1; } .cal b { z-index: 1; align-self: end; text-align: center; font-size: 9px; line-height: 10px; color: #222; }
    .text { height: 20px; background: #fff; border: 1px solid #a0a0a0; padding: 0 3px; width: 120px; appearance: none; }
    .date { margin-top: 10px; display: block; }
    .filters { display: flex; border: solid #c6c6c6; border-width: 2px 1px 2px 1px; }
    .filters .left { width: 460px; padding: 5px 5px 0; display: flex; flex-direction: column; gap: 4px; font-family: "Liberation Sans", Arial, sans-serif; }
    .filters .left span { line-height: 18px; margin-bottom: 1px; padding-left: 2px; }
    .filters .memo { flex: 1; margin: 1px 2px 1px 0; border: 1px solid #a0a0a0; background: #fff; resize: none; }
    .detail { border: solid #c6c6c6; border-width: 0 1px 1px 1px; padding: 2px 8px; margin: 0; font-family: "Liberation Sans", Arial, sans-serif; font-size: 12px; line-height: 22px; }
    .detail dt { font-weight: 700; } .detail dt:last-child { font-weight: 400; }
    booking-planner { color: #111; }
    .status { display: flex; align-items: center; height: 23px; border-top: 1px solid #a0a0a0; padding: 0 17px 0 1px; justify-content: space-between; color: #111; }
    .ok { background: #008000; color: #fff; padding: 0 4px; line-height: 17px; }
    master-data-menu { position: absolute; left: 74px; top: 62px; width: 280px; }
    portal-dialog { position: absolute; left: 355px; top: 61px; width: 1160px; }
  `];

  render() {
    return html`
      <header class="title">${icon("appHouse")}<h1>Fewo-Verwalter 27.1.3</h1>
        <div class="winbtns"><button aria-label="Minimieren">${glyph.min}</button><button aria-label="Wiederherstellen">${glyph.restore}</button><button aria-label="Schließen">${glyph.close}</button></div>
      </header>
      <nav class="menubar">
        <button>Programm</button><button class="on">Stammdaten</button><button>Ansicht</button><button>Statistiken</button><button>Mailing</button><button>Import/Export</button><button>Tools</button><button>?</button>
        <span class="grip"></span>
        ${(["owner", "house", "green", "orange", "clipboard"] as IconName[]).map((n) => html`<button class="tool" aria-label=${n}>${icon(n)}</button>`)}
        <button class="wide">${icon("worker")}Reinigungs- und Serviceeinsatzplanung</button>
        <span class="rule"></span>
        <button class="chat">${icon("chat")}Chat</button>
        <button class="online">${icon("online")}Online-Vorgänge</button><span class="badge">17</span>
        <button class="changes">Änderungen</button><span class="badge">1</span>
        <button class="ratings">${icon("star")}Bewertungen</button>
        <span class="rule"></span>
        <button class="tool" aria-label="Einstellungen">${icon("gear")}</button>
        <span class="rule"></span>
        <button class="skin">Skin<span class="tri"></span></button><span class="tri dim"></span>
      </nav>
      <section class="top">
        <span class="alarm"></span>
        <div class="tabline">
          <div class="belegung"><span class="cal">${icon("calendar")}<b>23</b></span>Belegung</div>
          <input class="text date" aria-label="Datum" .value=${"08.03.2024"}>
        </div>
        <div class="filters">
          <div class="left"><span>früheste Anreise</span>
            ${["[alle Häuser]", "[alle Objekte]", "Berlin, Brandenburg"].map((t) => html`<select class="text" aria-label=${t}><option>${t}</option></select>`)}
          </div>
          <textarea class="memo" aria-label="Bemerkung"></textarea>
        </div>
        <dl class="detail"><dt>Vorgang</dt><dt>Anreise</dt><dt>Abreise</dt><dt>Nächte</dt></dl>
      </section>
      <booking-planner></booking-planner>
      <footer class="status"><span class="ok">Verbindung zu Feondi erfolgreich hergestellt</span><span>Verbindung zur Datenbank erfolgreich hergestellt</span></footer>
      <master-data-menu></master-data-menu>
      <portal-dialog></portal-dialog>`;
  }
}
